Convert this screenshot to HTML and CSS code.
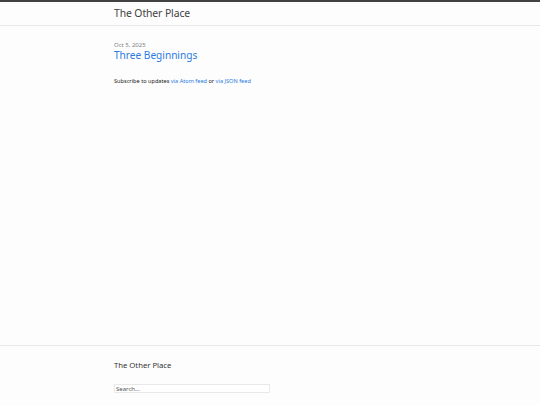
FILE: index.html
```html
<!DOCTYPE html>
<html lang="en">
<head>
<meta charset="utf-8">
<title>The Other Place</title>
<link rel="stylesheet" href="styles.css">
</head>
<body>
<header class="site-header">
  <div class="wrapper">
    <a class="site-title" href="#">The Other Place</a>
  </div>
</header>
<main class="page-content">
  <div class="wrapper">
    <ul class="post-list">
      <li>
        <span class="post-meta">Oct 5, 2025</span>
        <h3 class="post-title"><a href="#">Three Beginnings</a></h3>
      </li>
    </ul>
    <p class="rss-subscribe">Subscribe to updates <a href="#">via Atom feed</a> or <a href="#">via JSON feed</a></p>
  </div>
</main>
<footer class="site-footer">
  <div class="wrapper">
    <h2 class="footer-heading">The Other Place</h2>
    <input class="search" type="text" placeholder="Search...">
  </div>
</footer>
</body>
</html>
```
FILE: styles.css
```css
html, body {
  margin: 0;
  padding: 0;
}
body {
  background: #fdfdfd;
  color: #222;
  font-family: "Noto Sans", "Open Sans", sans-serif;
  min-height: 100vh;
  display: flex;
  flex-direction: column;
}
a {
  color: #2a7ae2;
  text-decoration: none;
}
.wrapper {
  width: 312px;
  margin: 0 auto;
  padding: 0 114px;
  box-sizing: content-box;
}
.site-header {
  border-top: 2px solid #424242;
  border-bottom: 1px solid #e8e8e8;
  height: 23px;
}
.site-title {
  display: block;
  color: #424242;
  font-size: 10.4px;
  line-height: 23px;
  letter-spacing: -0.1px;
}
.page-content {
  flex: 1;
  padding-top: 15px;
}
.post-list {
  list-style: none;
  margin: 0;
  padding: 0;
}
.post-meta {
  display: block;
  color: #828282;
  font-size: 6px;
  line-height: 8px;
}
.post-title {
  margin: 0;
  font-weight: normal;
  font-size: 10.1px;
  line-height: 13px;
}
.rss-subscribe {
  margin: 15px 0 0;
  font-size: 5.6px;
  line-height: 8px;
}
.site-footer {
  border-top: 1px solid #e8e8e8;
  height: 60px;
  box-sizing: border-box;
  padding-top: 14px;
}
.footer-heading {
  margin: 0;
  font-weight: normal;
  font-size: 7.7px;
  line-height: 10px;
  color: #333;
}
.search {
  display: block;
  margin-top: 14px;
  width: 156px;
  height: 9px;
  box-sizing: border-box;
  border: 1px solid #e8e8e8;
  background: #fff;
  padding: 0 1px;
  font-family: "Noto Sans", sans-serif;
  font-size: 6px;
}
.search::placeholder {
  color: #555;
}
```
